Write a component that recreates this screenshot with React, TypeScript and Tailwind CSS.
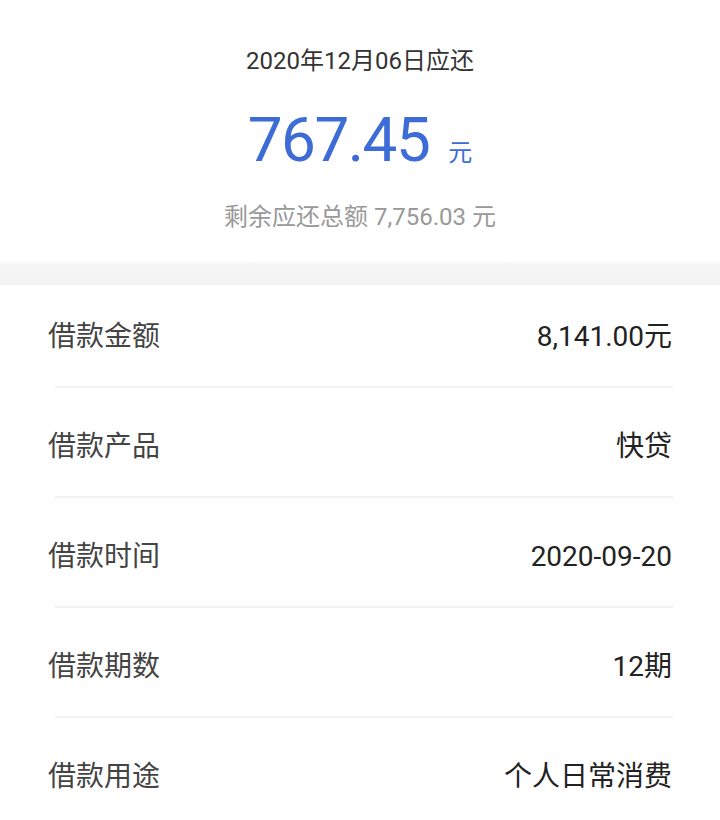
const rows = [
  { label: "借款金额", value: "8,141.00元" },
  { label: "借款产品", value: "快贷" },
  { label: "借款时间", value: "2020-09-20" },
  { label: "借款期数", value: "12期" },
  { label: "借款用途", value: "个人日常消费" },
];

const font = { fontFamily: 'Roboto, "Noto Sans CJK SC", sans-serif' };

export default function App() {
  return (
    <div className="w-[720px] h-[820px] bg-white overflow-hidden" style={font}>
      <div className="flex flex-col items-center pt-[45px] h-[262px]">
        <div className="text-[24px] leading-[32px] text-[#333]">2020年12月06日应还</div>
        <div className="flex items-baseline mt-[23px] h-[80px]">
          <span className="text-[62px] leading-[80px] text-[#3d6cd6] tracking-[-1.5px]">767.45</span>
          <span className="text-[24px] text-[#3d6cd6] ml-[19px]">元</span>
        </div>
        <div className="text-[24px] leading-[30px] text-[#999] mt-[22px]">
          剩余应还总额 7,756.03 元
        </div>
      </div>
      <div className="h-[23px] bg-gradient-to-b from-[#f7f7f7] to-[#f2f2f2]" />
      {rows.map((r, i) => (
        <div key={r.label}>
          <div
            className={`flex justify-between items-center px-[48px] ${
              i === 0 ? "pt-[32px]" : "pt-[39px]"
            } pb-[29px]`}
          >
            <span className="text-[28px] leading-[40px] text-[#444]">{r.label}</span>
            <span className="text-[28px] leading-[40px] text-[#222]">{r.value}</span>
          </div>
          {i < rows.length - 1 && <div className="h-[2px] bg-[#f1f1f1] ml-[55px] mr-[47px]" />}
        </div>
      ))}
    </div>
  );
}
